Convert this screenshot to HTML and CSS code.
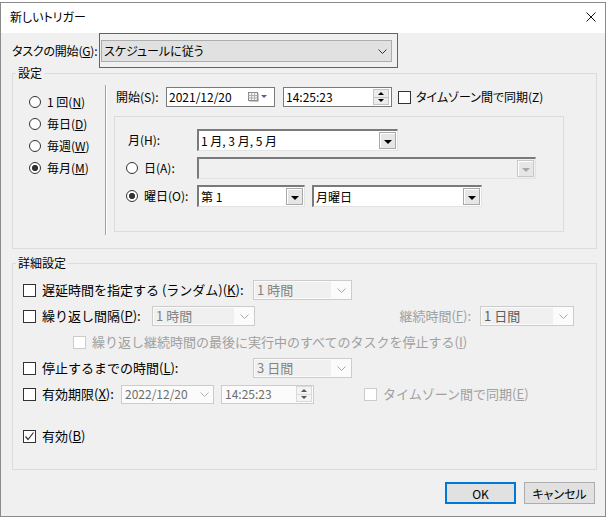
FILE: index.html
```html
<!DOCTYPE html>
<html lang="ja">

<head>
    <meta charset="UTF-8">
    <meta name="viewport" content="width=device-width, initial-scale=1.0">
    <title>新しいトリガー</title>
    <link rel="stylesheet" href="styles.css">
</head>

<body>
    <div class="dialog">
        <div class="titlebar">
            <span class="title p">新しいトリガー</span>
            <svg class="close" width="10" height="10" viewBox="0 0 10 10">
                <path d="M0.5 0.5 L9.5 9.5 M9.5 0.5 L0.5 9.5" stroke="#111" stroke-width="1" fill="none" />
            </svg>
        </div>

        <div class="start-row">
            <span class="start-label"><span class="p">タスクの開始</span>(<u>G</u>):</span>
            <div class="highlight">
                <div class="combo">
                    <span class="p">スケジュールに従う</span>
                    <svg width="9" height="5" viewBox="0 0 9 5">
                        <polyline points="0.5,0.5 4.5,4.5 8.5,0.5" stroke="#333" fill="none" />
                    </svg>
                </div>
            </div>
        </div>

        <fieldset class="group settings">
            <legend>設定</legend>
            <div class="settings-body">
                <div class="freq">
                    <div class="radio-row"><span class="radio"></span><span>1 回(<u>N</u>)</span></div>
                    <div class="radio-row"><span class="radio"></span><span>毎日(<u>D</u>)</span></div>
                    <div class="radio-row"><span class="radio"></span><span>毎週(<u>W</u>)</span></div>
                    <div class="radio-row"><span class="radio checked"></span><span>毎月(<u>M</u>)</span></div>
                </div>
                <div class="sep"></div>
                <div class="schedule">
                    <div class="start-line">
                        <span class="lbl-start">開始(S):</span>
                        <div class="field date">
                            <span>2021/12/20</span>
                            <svg width="20" height="10" viewBox="0 0 20 10">
                                <rect x="0.5" y="0.5" width="9" height="8" fill="#f4f4f4" stroke="#8a8a8a" />
                                <path d="M0.5 3.5 H9.5 M0.5 6 H9.5 M3.5 0.5 V8.5 M6.5 0.5 V8.5" stroke="#b0b0b0" />
                                <path d="M1.5 9.5 H10.5 V1.5" stroke="#c8c8c8" fill="none" />
                                <polygon points="13,3 19,3 16,6" fill="#4e6490" />
                            </svg>
                        </div>
                        <div class="field time">
                            <span>14:25:23</span>
                            <span class="spin">
                                <span class="spin-btn"><i class="tri-up"></i></span>
                                <span class="spin-btn"><i class="tri-down"></i></span>
                            </span>
                        </div>
                        <span class="check"></span>
                        <span class="check-label"><span class="p">タイムゾーン間で同期</span>(Z)</span>
                    </div>

                    <div class="panel">
                        <div class="panel-row">
                            <span class="panel-label">月(H):</span>
                            <div class="oldcombo month">
                                <span>1 月, 3 月, 5 月</span>
                                <span class="ddbtn"><i></i></span>
                            </div>
                        </div>
                        <div class="panel-row">
                            <span class="panel-label radio-label"><span class="radio"></span><span>日(A):</span></span>
                            <div class="oldcombo day disabled">
                                <span></span>
                                <span class="ddbtn"><i></i></span>
                            </div>
                        </div>
                        <div class="panel-row">
                            <span class="panel-label radio-label"><span class="radio checked"></span><span>曜日(O):</span></span>
                            <div class="oldcombo week">
                                <span>第 1</span>
                                <span class="ddbtn"><i></i></span>
                            </div>
                            <div class="oldcombo weekday">
                                <span>月曜日</span>
                                <span class="ddbtn"><i></i></span>
                            </div>
                        </div>
                    </div>
                </div>
            </div>
        </fieldset>

        <fieldset class="group advanced">
            <legend>詳細設定</legend>
            <div class="adv-body">
                <div class="adv-row">
                    <span class="check"></span>
                    <span class="adv-label wide">遅延時間を指定する (ランダム)(<u>K</u>):</span>
                    <div class="mcombo w99">
                        <span class="mtext">1 時間</span>
                        <svg width="9" height="5" viewBox="0 0 9 5">
                            <polyline points="0.5,0.5 4.5,4.5 8.5,0.5" stroke="#a8a8a8" fill="none" />
                        </svg>
                    </div>
                </div>
                <div class="adv-row">
                    <span class="check"></span>
                    <span class="adv-label repeat">繰り返し間隔(<u>P</u>):</span>
                    <div class="mcombo w103">
                        <span class="mtext">1 時間</span>
                        <svg width="9" height="5" viewBox="0 0 9 5">
                            <polyline points="0.5,0.5 4.5,4.5 8.5,0.5" stroke="#a8a8a8" fill="none" />
                        </svg>
                    </div>
                    <span class="muted push">継続時間(<u>F</u>):</span>
                    <div class="mcombo w94 dark">
                        <span class="mtext">1 日間</span>
                        <svg width="9" height="5" viewBox="0 0 9 5">
                            <polyline points="0.5,0.5 4.5,4.5 8.5,0.5" stroke="#a8a8a8" fill="none" />
                        </svg>
                    </div>
                </div>
                <div class="adv-row indent">
                    <span class="check disabled"></span>
                    <span class="muted">繰り返し継続時間の最後に実行中のすべてのタスクを停止する(<u>I</u>)</span>
                </div>
                <div class="adv-row">
                    <span class="check"></span>
                    <span class="adv-label wide">停止するまでの時間(<u>L</u>):</span>
                    <div class="mcombo w99">
                        <span class="mtext">3 日間</span>
                        <svg width="9" height="5" viewBox="0 0 9 5">
                            <polyline points="0.5,0.5 4.5,4.5 8.5,0.5" stroke="#a8a8a8" fill="none" />
                        </svg>
                    </div>
                </div>
                <div class="adv-row">
                    <span class="check"></span>
                    <span class="adv-label expire">有効期限(<u>X</u>):</span>
                    <div class="dfield">
                        <span>2022/12/20</span>
                        <svg width="9" height="5" viewBox="0 0 9 5">
                            <polyline points="0.5,0.5 4.5,4.5 8.5,0.5" stroke="#b4b4b4" fill="none" />
                        </svg>
                    </div>
                    <div class="dfield dtime">
                        <span>14:25:23</span>
                        <span class="spin light">
                            <span class="spin-btn"><i class="tri-up"></i></span>
                            <span class="spin-btn"><i class="tri-down"></i></span>
                        </span>
                    </div>
                    <span class="check disabled tz"></span>
                    <span class="muted">タイムゾーン間で同期(<u>E</u>)</span>
                </div>
                <div class="adv-row enable">
                    <span class="check">
                        <svg width="11" height="11" viewBox="0 0 11 11">
                            <polyline points="1.5,5.5 4,8.5 9.5,1.5" stroke="#333" stroke-width="1.2" fill="none" />
                        </svg>
                    </span>
                    <span>有効(<u>B</u>)</span>
                </div>
            </div>
        </fieldset>

        <div class="buttons">
            <button class="btn default">OK</button>
            <button class="btn"><span class="p">キャンセル</span></button>
        </div>
    </div>
</body>

</html>
```

FILE: styles.css
```css
* {
    box-sizing: border-box;
}

html,
body {
    margin: 0;
}

body {
    width: 608px;
    height: 519px;
    overflow: hidden;
    background-color: #fff;
    font-family: "Noto Sans CJK JP", sans-serif;
    font-size: 12px;
    line-height: 16px;
    color: #000;
}

u {
    text-underline-offset: 1px;
}

/* proportional kana, only on runs without brackets */
.p {
    font-feature-settings: "palt" 1;
}

.dialog {
    width: 606px;
    height: 515px;
    margin-top: 2px;
    border: 1px solid #8a8a8a;
    background-color: #f0f0f0;
    white-space: nowrap;
}

/* title bar */
.titlebar {
    height: 30px;
    background-color: #fff;
    display: flex;
    align-items: center;
    justify-content: space-between;
    padding: 0 9px 2px 9px;
}

.close {
    display: block;
}

/* schedule start row */
.start-row {
    display: flex;
    align-items: center;
    height: 35px;
    margin-left: 11px;
}

.start-label {
    width: 87px;
    letter-spacing: -0.2px;
}

.highlight {
    width: 299px;
    height: 35px;
    border: none;
    box-shadow: inset 0 0 0 1px #ff2020;
    padding: 7px 6px 6px 2px;
}

.combo {
    height: 22px;
    border: 1px solid #adadad;
    background-color: #e1e1e1;
    display: flex;
    align-items: center;
    justify-content: space-between;
    padding: 0 4px 0 2px;
}

.combo svg {
    display: block;
}

/* group boxes */
.group {
    margin: 0 0 0 11px;
    width: 585px;
    padding: 0;
    min-width: 0;
    border: 1px solid #dcdcdc;
}

.group legend {
    padding: 0 2px;
    margin-left: 3px;
    line-height: 10px;
}

.settings-body {
    display: flex;
    height: 170px;
}

.freq {
    width: 92px;
    padding: 13px 0 0 16px;
}

.radio-row {
    height: 22px;
    display: flex;
    align-items: center;
    gap: 6px;
}

.radio {
    width: 12px;
    height: 12px;
    flex: none;
    border: 1px solid #333;
    border-radius: 50%;
    background-color: #fff;
}

.radio.checked {
    background: radial-gradient(circle, #333 0 2.8px, #fff 3.4px);
}

.sep {
    width: 2px;
    height: 150px;
    margin-top: 7px;
    border-left: 1px solid #a0a0a0;
    border-right: 1px solid #fff;
}

.schedule {
    padding: 9px 0 0 7px;
}

.start-line {
    display: flex;
    align-items: center;
    height: 20px;
}

.lbl-start {
    width: 52px;
    padding-left: 2px;
}

.field {
    width: 109px;
    height: 20px;
    border: 1px solid #7a7a7a;
    background-color: #fff;
    display: flex;
    align-items: center;
    justify-content: space-between;
    padding: 0 6px 0 2px;
}

.field svg {
    display: block;
}

.field.time {
    margin-left: 8px;
    padding-right: 2px;
}

.spin {
    width: 16px;
    height: 16px;
    display: flex;
    flex-direction: column;
    border: 1px solid #c4c4c4;
    background-color: #ececec;
}

.spin-btn {
    flex: 1;
    display: flex;
    align-items: center;
    justify-content: center;
}

.spin-btn + .spin-btn {
    border-top: 1px solid #c4c4c4;
}

.tri-up,
.tri-down {
    width: 0;
    height: 0;
    border-left: 3px solid transparent;
    border-right: 3px solid transparent;
}

.tri-up {
    border-bottom: 3px solid #000;
}

.tri-down {
    border-top: 3px solid #000;
}

.spin.light {
    border-color: #dadada;
    background-color: #f4f4f4;
}

.spin.light .spin-btn + .spin-btn {
    border-top-color: #dadada;
}

.spin.light .tri-up {
    border-bottom-color: #555;
}

.spin.light .tri-down {
    border-top-color: #555;
}

.check {
    width: 13px;
    height: 13px;
    flex: none;
    border: 1px solid #333;
    background-color: #fff;
    display: flex;
    align-items: center;
    justify-content: center;
}

.check.disabled {
    border-color: #cccccc;
}

.start-line .check {
    margin-left: 6px;
}

.check-label {
    margin-left: 5px;
}

/* month / day panel */
.panel {
    width: 450px;
    height: 116px;
    margin-top: 9px;
    border: 1px solid #dcdcdc;
    padding-top: 12px;
}

.panel-row {
    display: flex;
    align-items: center;
    height: 22px;
    margin-bottom: 6px;
}

.panel-label {
    width: 82px;
    padding-left: 13px;
}

.panel-label.radio-label {
    display: flex;
    align-items: center;
    gap: 6px;
    padding-left: 11px;
}

.oldcombo {
    height: 22px;
    background-color: #fff;
    border-style: solid;
    border-width: 2px 1px 1px 2px;
    border-color: #7a7a7a #e3e3e3 #e3e3e3 #7a7a7a;
    display: flex;
    align-items: center;
    justify-content: space-between;
    padding: 0 1px 0 2px;
}

.oldcombo.month {
    width: 201px;
}

.oldcombo.day {
    width: 339px;
    background-color: #f0f0f0;
}

.oldcombo.week {
    width: 108px;
}

.oldcombo.weekday {
    width: 170px;
    margin-left: 7px;
}

.ddbtn {
    width: 17px;
    height: 17px;
    background-color: #e6e6e6;
    border: 1px solid #a8a8a8;
    box-shadow: inset 1px 1px #fff;
    display: flex;
    align-items: center;
    justify-content: center;
    padding-top: 2px;
}

.ddbtn i {
    width: 0;
    height: 0;
    border-left: 4px solid transparent;
    border-right: 4px solid transparent;
    border-top: 4px solid #000;
}

.oldcombo.disabled .ddbtn {
    border-color: #c8c8c8;
}

.oldcombo.disabled .ddbtn i {
    border-top-color: #a8a8a8;
}

/* advanced settings */
.advanced {
    margin-top: 9px;
}

.adv-body {
    height: 201px;
    padding: 9px 22px 0 10px;
    font-size: 13px;
    line-height: 18px;
}

.adv-row {
    display: flex;
    align-items: center;
    height: 26px;
}

.adv-row > .check {
    margin-right: 6px;
}

.adv-label.wide {
    width: 211px;
}

.adv-label.repeat {
    width: 110px;
}

.adv-label.expire {
    width: 79px;
}

.mcombo {
    height: 20px;
    border: 1px solid #cccccc;
    background-color: #fbfbfb;
    display: flex;
    align-items: center;
    padding: 1px 5px 1px 1px;
    gap: 6px;
    color: #838383;
}

.mcombo svg {
    display: block;
    flex: none;
}

.mtext {
    flex: 1;
    height: 100%;
    background-color: #f0f0f0;
    padding-left: 2px;
    line-height: 16px;
}

.w99 {
    width: 99px;
}

.w103 {
    width: 103px;
}

.w94 {
    width: 94px;
    margin-left: 9px;
}

.mcombo.dark {
    color: #5e5e5e;
}

.muted {
    color: #a0a0a0;
}

.push {
    margin-left: auto;
}

.adv-row.indent {
    padding-left: 50px;
}

.dfield {
    width: 93px;
    height: 19px;
    border: 1px solid #cccccc;
    background-color: #fbfbfb;
    color: #6d6d6d;
    font-size: 12px;
    display: flex;
    align-items: center;
    justify-content: space-between;
    padding: 0 4px 0 3px;
}

.dfield svg {
    display: block;
}

.dfield.dtime {
    margin-left: 7px;
    padding-right: 1px;
}

.adv-row > .check.tz {
    margin-left: 50px;
}

.adv-row.enable {
    margin-top: 16px;
}

/* buttons */
.buttons {
    display: flex;
    justify-content: flex-end;
    gap: 8px;
    margin-top: 12px;
    padding-right: 10px;
}

.btn {
    width: 71px;
    height: 22px;
    padding: 0;
    font-family: inherit;
    font-size: 12px;
    color: #000;
    background-color: #e1e1e1;
    border: 1px solid #adadad;
}

.btn.default {
    border: 2px solid #0078d7;
}
```
